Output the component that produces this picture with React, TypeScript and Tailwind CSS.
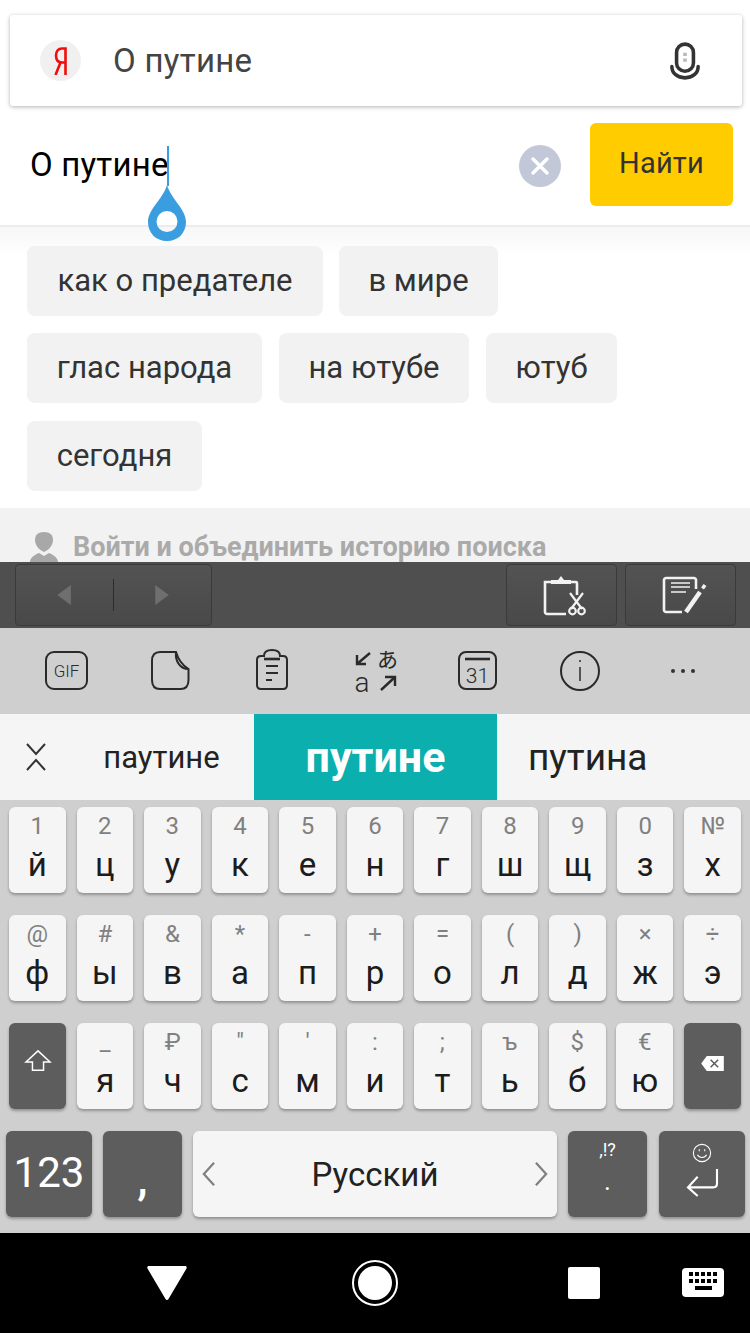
import React from "react";

type K = { top: string; main: string };

const row1: K[] = [
  { top: "1", main: "й" }, { top: "2", main: "ц" }, { top: "3", main: "у" }, { top: "4", main: "к" },
  { top: "5", main: "е" }, { top: "6", main: "н" }, { top: "7", main: "г" }, { top: "8", main: "ш" },
  { top: "9", main: "щ" }, { top: "0", main: "з" }, { top: "№", main: "х" },
];
const row2: K[] = [
  { top: "@", main: "ф" }, { top: "#", main: "ы" }, { top: "&", main: "в" }, { top: "*", main: "а" },
  { top: "-", main: "п" }, { top: "+", main: "р" }, { top: "=", main: "о" }, { top: "(", main: "л" },
  { top: ")", main: "д" }, { top: "×", main: "ж" }, { top: "÷", main: "э" },
];
const row3: K[] = [
  { top: "_", main: "я" }, { top: "₽", main: "ч" }, { top: '"', main: "с" }, { top: "'", main: "м" },
  { top: ":", main: "и" }, { top: ";", main: "т" }, { top: "ъ", main: "ь" }, { top: "$", main: "б" }, { top: "€", main: "ю" },
];

function Key({ top, main }: K) {
  return (
    <div className="w-[56.5px] h-[86px] shrink-0 rounded-[6px] bg-[#f5f5f5] shadow-[0_2px_3px_rgba(0,0,0,0.3)] flex flex-col items-center">
      <span className="h-[40px] pt-[3px] text-[24px] leading-[32px] text-[#808080]">{top}</span>
      <span className="text-[33px] leading-[36px] text-[#1c1c1c]">{main}</span>
    </div>
  );
}

function Chip({ width, children }: { width: string; children: string }) {
  return (
    <div className={`h-[70px] rounded-[8px] bg-[#f2f2f2] flex items-center justify-center text-[31px] text-[#333333] ${width}`}>
      {children}
    </div>
  );
}

function Dark({ className, children }: { className: string; children: React.ReactNode }) {
  return (
    <div className={`h-[86px] shrink-0 rounded-[6px] bg-[#5d5d5d] shadow-[0_2px_3px_rgba(0,0,0,0.3)] flex items-center justify-center text-white ${className}`}>
      {children}
    </div>
  );
}

function ToolIcon({ children }: { children: React.ReactNode }) {
  return (
    <svg viewBox="0 0 48 48" className="w-[48px] h-[48px]" fill="none" stroke="#2a2a2a" strokeWidth="2">
      {children}
    </svg>
  );
}

export default function App() {
  return (
    <div className="relative w-[750px] h-[1333px] overflow-hidden bg-white flex flex-col font-['Roboto',sans-serif]">
      <div className="h-[225px] shrink-0 px-[10px] pt-[15px]">
        <div className="w-[732px] h-[91px] bg-white rounded-[3px] shadow-[0_1px_4px_rgba(0,0,0,0.3)] flex items-center pl-[30px] pr-[42px]">
          <div className="w-[41px] h-[41px] rounded-full bg-[#f0f0f0] flex items-center justify-center">
            <svg viewBox="0 0 14 28" preserveAspectRatio="none" className="w-[14px] h-[28px]" fill="none" stroke="#f00d0d" strokeWidth="2.6">
              <path d="M11.500 28V1.500H8C4 1.500 2 4.500 2 8.500 2 12.500 4 15.500 8 15.500H11.500M6.500 15.500 1.500 28" />
            </svg>
          </div>
          <span className="ml-[32px] text-[33px] text-[#444444] tracking-[0.3px]">О путине</span>
          <svg viewBox="0 0 32 40" className="ml-auto w-[30px] h-[38px]" fill="none" stroke="#333333" strokeWidth="3.8">
            <rect x="7" y="2" width="18" height="29" rx="9" />
            <path d="M2 26c0 7 6 12 14 12s14-5 14-12" strokeLinecap="round" />
            <path d="M14 13h4M14 19h4" stroke="#bbbbbb" strokeWidth="3.500" />
          </svg>
        </div>
        <div className="h-[119px] flex items-center pl-[20px] pr-[7px]">
          <span className="text-[33px] text-black tracking-[0.2px] -mt-[1px]">О путине</span>
          <div className="ml-auto w-[42px] h-[42px] rounded-full bg-[#c3c8d8] flex items-center justify-center mt-[1px]">
            <svg viewBox="0 0 20 20" className="w-[20px] h-[20px]" stroke="white" strokeWidth="3.4" strokeLinecap="round">
              <path d="M3 3 17 17M17 3 3 17" />
            </svg>
          </div>
          <div className="ml-[29px] w-[143px] h-[83px] -mt-[3px] rounded-[6px] bg-[#ffcc00] flex items-center justify-center text-[29px] text-[#333333] tracking-[0.2px]">
            Найти
          </div>
        </div>
      </div>

      <div className="h-[283px] shrink-0 border-t-2 border-[#ececec] bg-gradient-to-b from-[#f7f7f7] to-white to-[30px] px-[27px] pt-[19px] flex flex-col gap-[17px]">
        <div className="flex gap-[16px]">
          <Chip width="w-[296px]">как о предателе</Chip>
          <Chip width="w-[159px]">в мире</Chip>
        </div>
        <div className="flex gap-[17px]">
          <Chip width="w-[235px]">глас народа</Chip>
          <Chip width="w-[190px]">на ютубе</Chip>
          <Chip width="w-[131px]">ютуб</Chip>
        </div>
        <div className="flex mt-[1px]">
          <Chip width="w-[175px]">сегодня</Chip>
        </div>
      </div>

      <div className="h-[54px] shrink-0 bg-[#f2f2f2] pl-[30px] pt-[24px] flex items-start overflow-hidden">
        <svg viewBox="0 0 28 30" className="w-[28px] h-[30px] shrink-0" fill="#a8a8a8">
          <path d="M14 0c6 0 9 3 9 8 0 5-4 10-9 12C9 18 5 13 5 8c0-5 3-8 9-8Z" />
          <path d="M0 30c0-4 4-7 9-9l5 3 5-3c5 2 9 5 9 9Z" />
        </svg>
        <span className="ml-[15px] text-[27px] leading-[30px] font-bold text-[#aaaaaa] whitespace-nowrap">Войти и объединить историю поиска</span>
      </div>

      <div className="h-[66px] shrink-0 bg-[#4f4f4f] flex items-center pl-[15px] pr-[14px]">
        <div className="w-[197px] h-[62px] rounded-[4px] border border-[#3a3a3a] bg-gradient-to-b from-[#535353] to-[#494949] flex items-center">
          <div className="w-[97px] flex justify-center">
            <svg viewBox="0 0 16 22" className="w-[15px] h-[20px]" fill="#6f6f6f"><path d="M15 0v22L0 11Z" /></svg>
          </div>
          <div className="w-px h-[32px] bg-[#2c2c2c]" />
          <div className="flex-1 flex justify-center">
            <svg viewBox="0 0 16 22" className="w-[15px] h-[20px]" fill="#6f6f6f"><path d="M0 0v22l15-11Z" /></svg>
          </div>
        </div>
        <div className="ml-auto w-[111px] h-[62px] rounded-[4px] border border-[#3a3a3a] bg-gradient-to-b from-[#535353] to-[#494949] flex items-center justify-center">
          <svg viewBox="0 0 50 44" className="w-[50px] h-[44px]" fill="none" stroke="#f2f2f2" strokeWidth="2.600">
            <path d="M29 41H10c-1 0-2-1-2-2V9h7M33 9h6c1 0 1 1 1 2v11" />
            <path d="M14 11V7h7l3-4 3 4h7v4Z" fill="#f2f2f2" stroke="none" />
            <path d="M33 20l12 16M46 20 34 36" strokeWidth="2.200" />
            <circle cx="35.500" cy="38" r="3.300" strokeWidth="2.200" />
            <circle cx="44.500" cy="38" r="3.300" strokeWidth="2.200" />
          </svg>
        </div>
        <div className="ml-[8px] w-[111px] h-[62px] rounded-[4px] border border-[#3a3a3a] bg-gradient-to-b from-[#535353] to-[#494949] flex items-center justify-center">
          <svg viewBox="0 0 52 44" className="w-[52px] h-[44px]" fill="none" stroke="#f2f2f2" strokeWidth="2.600">
            <path d="M27 39H11c-1 0-2-1-2-2V7c0-1 1-2 2-2h28c1 0 2 1 2 2v9" />
            <path d="M16 10h19M16 14h19M16 19h15" strokeWidth="1.700" />
            <path d="M31 39 45 19" strokeWidth="4.500" />
            <path d="M47.500 15.500 50 12" strokeWidth="3.500" />
          </svg>
        </div>
      </div>

      <div className="h-[86px] shrink-0 bg-[#cfcfcf] flex items-center pl-[43px] pr-[43px] justify-between">
        <ToolIcon>
          <rect x="3" y="5" width="41" height="37" rx="8" />
          <text x="23.500" y="30" textAnchor="middle" fontSize="17" fontWeight="300" fill="#2a2a2a" stroke="none" fontFamily="Roboto">GIF</text>
        </ToolIcon>
        <ToolIcon>
          <path d="M14 5h16c2 7 6 13 12.500 17v11c0 6-3 9-8 9H14c-5 0-8-3-8-9V14c0-6 3-9 8-9Z" />
          <path d="M30 5c-1 9 4 17 12.500 17" />
        </ToolIcon>
        <ToolIcon>
          <path d="M16 9h-3c-3 0-4 2-4 4v25c0 2 1 4 4 4h22c3 0 4-2 4-4V13c0-2-1-4-4-4h-3c0-4-3-6-8-6s-8 2-8 6Z" />
          <path d="M16 12h16" strokeWidth="2.600" />
          <path d="M18 19h12M18 26h12M18 33h6" />
        </ToolIcon>
        <svg viewBox="0 -6 48 60" className="w-[48px] h-[60px] -my-[6px]" fill="none" stroke="#2a2a2a" strokeWidth="2.400">
          <path d="M19 6 6 17M6 8v9h9" />
          <path d="M30 43 43 31M34 30h10v9" />
          <text x="36.500" y="20" textAnchor="middle" fontSize="21" fill="#2a2a2a" stroke="none" fontFamily="'Noto Sans CJK JP'">あ</text>
          <text x="11" y="45" textAnchor="middle" fontSize="28" fontWeight="300" fill="#2a2a2a" stroke="none" fontFamily="Roboto">а</text>
        </svg>
        <ToolIcon>
          <rect x="5" y="5" width="37" height="37" rx="7" />
          <path d="M11 12h25" strokeWidth="2.600" />
          <text x="23.500" y="36" textAnchor="middle" fontSize="21" fontWeight="300" fill="#2a2a2a" stroke="none" fontFamily="Roboto">31</text>
        </ToolIcon>
        <ToolIcon>
          <circle cx="24" cy="24" r="19" />
          <path d="M24 20v14" strokeWidth="1.500" />
          <path d="M24 13v2" strokeWidth="1.500" />
        </ToolIcon>
        <div className="w-[48px] flex justify-center gap-[6px] -mt-[1px]">
          <span className="w-[4px] h-[4px] rounded-full bg-[#333333]" />
          <span className="w-[4px] h-[4px] rounded-full bg-[#333333]" />
          <span className="w-[4px] h-[4px] rounded-full bg-[#333333]" />
        </div>
      </div>

      <div className="h-[86px] shrink-0 bg-[#f5f5f5] flex items-center">
        <div className="w-[72px] flex justify-center">
          <svg viewBox="0 0 22 30" className="w-[22px] h-[30px]" fill="none" stroke="#333333" strokeWidth="2">
            <path d="M2 2l9 10 9-10M2 28l9-10 9 10" />
          </svg>
        </div>
        <div className="w-[179px] text-center text-[31px] text-[#222222] pt-[2px]">паутине</div>
        <div className="ml-[3px] w-[243px] h-full bg-[#0aafae] flex items-center justify-center text-[43px] font-bold text-white">путине</div>
        <div className="pl-[31px] text-[37px] text-[#222222] pt-[2px]">путина</div>
      </div>

      <div className="h-[433px] shrink-0 bg-[#cfcfcf] pt-[7px] flex flex-col gap-[22px]">
        <div className="flex justify-between pl-[9px] pr-[9px]">
          {row1.map((k) => <Key key={k.main} {...k} />)}
        </div>
        <div className="flex justify-between pl-[9px] pr-[9px]">
          {row2.map((k) => <Key key={k.main} {...k} />)}
        </div>
        <div className="flex justify-between pl-[9px] pr-[9px]">
          <Dark className="w-[57px] pb-[10px]">
            <svg viewBox="0 0 30 26" className="w-[28px] h-[24px]" fill="none" stroke="white" strokeWidth="1.6">
              <path d="M15 2 2 14h7v9h12v-9h7Z" />
            </svg>
          </Dark>
          {row3.map((k) => <Key key={k.main} {...k} />)}
          <Dark className="w-[57px] pb-[6px]">
            <svg viewBox="0 0 26 18" className="w-[25px] h-[17px]">
              <path d="M7 1h18v16H7L1 9Z" fill="white" />
              <path d="M11 5l8 8M19 5l-8 8" stroke="#5d5d5d" strokeWidth="1.6" />
            </svg>
          </Dark>
        </div>
        <div className="flex pl-[6px]">
          <Dark className="w-[86px] text-[42px] pb-[4px]">123</Dark>
          <Dark className="ml-[11px] w-[79px]">
            <span className="text-[46px] font-medium leading-none mt-[8px]">,</span>
          </Dark>
          <div className="ml-[11px] w-[364px] h-[86px] rounded-[6px] bg-[#f5f5f5] shadow-[0_2px_3px_rgba(0,0,0,0.3)] flex items-center justify-between px-[8px] text-[33px] text-[#222222]">
            <svg viewBox="0 0 16 28" className="w-[15px] h-[26px]" fill="none" stroke="#808080" strokeWidth="2.4"><path d="M14 2 3 14l11 12" /></svg>
            <span className="pt-[2px]">Русский</span>
            <svg viewBox="0 0 16 28" className="w-[15px] h-[26px]" fill="none" stroke="#808080" strokeWidth="2.4"><path d="M2 2l11 12L2 26" /></svg>
          </div>
          <Dark className="ml-[11px] w-[79px] flex-col">
            <span className="text-[18px] leading-[22px] -mt-[13px]">,!?</span>
            <span className="text-[26px] leading-[32px] mt-[4px]">.</span>
          </Dark>
          <Dark className="ml-[12px] w-[86px] flex-col">
            <svg viewBox="0 0 22 22" className="w-[20px] h-[20px] -mt-[8px]" fill="none" stroke="white" strokeWidth="1.2">
              <circle cx="11" cy="11" r="9.5" />
              <path d="M6 13c2 4 8 4 10 0" />
              <path d="M8 7v2M14 7v2" />
            </svg>
            <svg viewBox="0 0 34 30" className="w-[33px] h-[29px] mt-[5px]" fill="none" stroke="white" strokeWidth="2.2">
              <path d="M32 1v15c0 3-2 4-4 4H2M12 9 2 20l10 9" />
            </svg>
          </Dark>
        </div>
      </div>

      <div className="h-[100px] shrink-0 bg-black relative">
        <svg viewBox="0 0 40 34" preserveAspectRatio="none" className="absolute left-[147px] top-[33px] w-[40px] h-[34px]" fill="white">
          <path d="M2 0h36c1.500 0 2 1 1.500 2.500L21.500 33c-.7 1.300-2.300 1.300-3 0L.5 2.500C0 1 .5 0 2 0Z" />
        </svg>
        <div className="absolute left-[352px] top-[27px] w-[46px] h-[46px] rounded-full border-2 border-white flex items-center justify-center">
          <div className="w-[34px] h-[34px] rounded-full bg-white" />
        </div>
        <div className="absolute left-[568px] top-[34px] w-[32px] h-[32px] rounded-[2px] bg-white" />
        <div className="absolute left-[682px] top-[35px] w-[42px] h-[29px] rounded-[4px] bg-white flex flex-col items-center pt-[4px] gap-[2px]">
          <svg viewBox="0 0 30 12" className="w-[30px] h-[12px]" fill="black">
            <path d="M1 0h4v4H1zM7 0h4v4H7zM13 0h4v4h-4zM19 0h4v4h-4zM25 0h4v4h-4zM1 7h4v4H1zM7 7h4v4H7zM13 7h4v4h-4zM19 7h4v4h-4zM25 7h4v4h-4z" />
          </svg>
          <div className="w-[17px] h-[4px] bg-black" />
        </div>
      </div>

      <div className="absolute left-[167px] top-[146px] w-[2px] h-[40px] bg-[#3a9ddf]" />
      <svg viewBox="0 0 40 56" className="absolute left-[147px] top-[185px] w-[40px] h-[56px]">
        <path fillRule="evenodd" fill="#3a9ddf" d="M20 0C24 14 39 24 39 37 39 48 31 56 20 56 9 56 1 48 1 37 1 24 16 14 20 0ZM20 26a10.500 10.500 0 1 0 0 21 10.500 10.500 0 0 0 0-21Z" />
      </svg>
    </div>
  );
}
